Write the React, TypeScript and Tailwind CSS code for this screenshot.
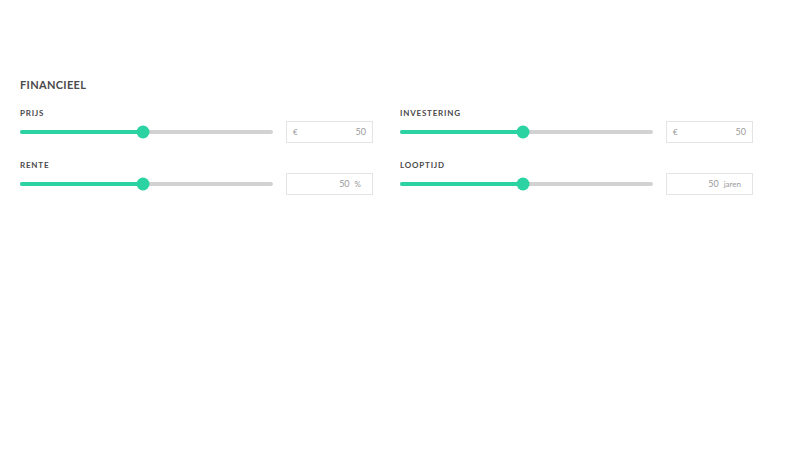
import React from 'react';

interface Field {
  label: string;
  value: number;
  prefix?: string;
  suffix?: string;
}

const fields: Field[] = [
  { label: 'PRIJS', value: 50, prefix: '€' },
  { label: 'INVESTERING', value: 50, prefix: '€' },
  { label: 'RENTE', value: 50, suffix: '%' },
  { label: 'LOOPTIJD', value: 50, suffix: 'jaren' },
];

const Slider: React.FC<{ percent: number }> = ({ percent }) => (
  <div className="relative w-[253px] h-[4px] rounded-full bg-[#d2d2d2]">
    <div className="h-full rounded-full bg-[#2bd3a2]" style={{ width: `${percent}%` }} />
    <div
      className="absolute top-1/2 w-[13px] h-[13px] -translate-x-1/2 -translate-y-1/2 rounded-full bg-[#2bd3a2]"
      style={{ left: `${percent}%` }}
    />
  </div>
);

const SliderField: React.FC<{ field: Field }> = ({ field }) => (
  <div>
    <div className="text-[8px] leading-[10px] font-bold tracking-[0.1em] text-[#4a4a4a]">{field.label}</div>
    <div className="mt-[3px] flex items-center h-[22px]">
      <Slider percent={48.5} />
      <div className="ml-[13px] w-[87px] h-[22px] border border-[#e4e4e4] flex items-center px-[6px] text-[#9a9a9a]">
        {field.prefix && <span className="text-[8px]">{field.prefix}</span>}
        <span className="ml-auto text-[9px]">{field.value}</span>
        {field.suffix && <span className="ml-[5px] mr-[5px] text-[8px]">{field.suffix}</span>}
      </div>
    </div>
  </div>
);

export default function App() {
  return (
    <div className="w-[800px] h-[450px] bg-white pl-5 pt-[78px]" style={{ fontFamily: 'Lato, "Open Sans", sans-serif' }}>
      <h2 className="text-[11px] leading-[14px] font-bold tracking-[0.03em] text-[#4a4a4a]">FINANCIEEL</h2>
      <div className="mt-4 grid grid-cols-[353px_353px] gap-x-[27px] gap-y-[17px]">
        {fields.map((f) => (
          <SliderField key={f.label} field={f} />
        ))}
      </div>
    </div>
  );
}
